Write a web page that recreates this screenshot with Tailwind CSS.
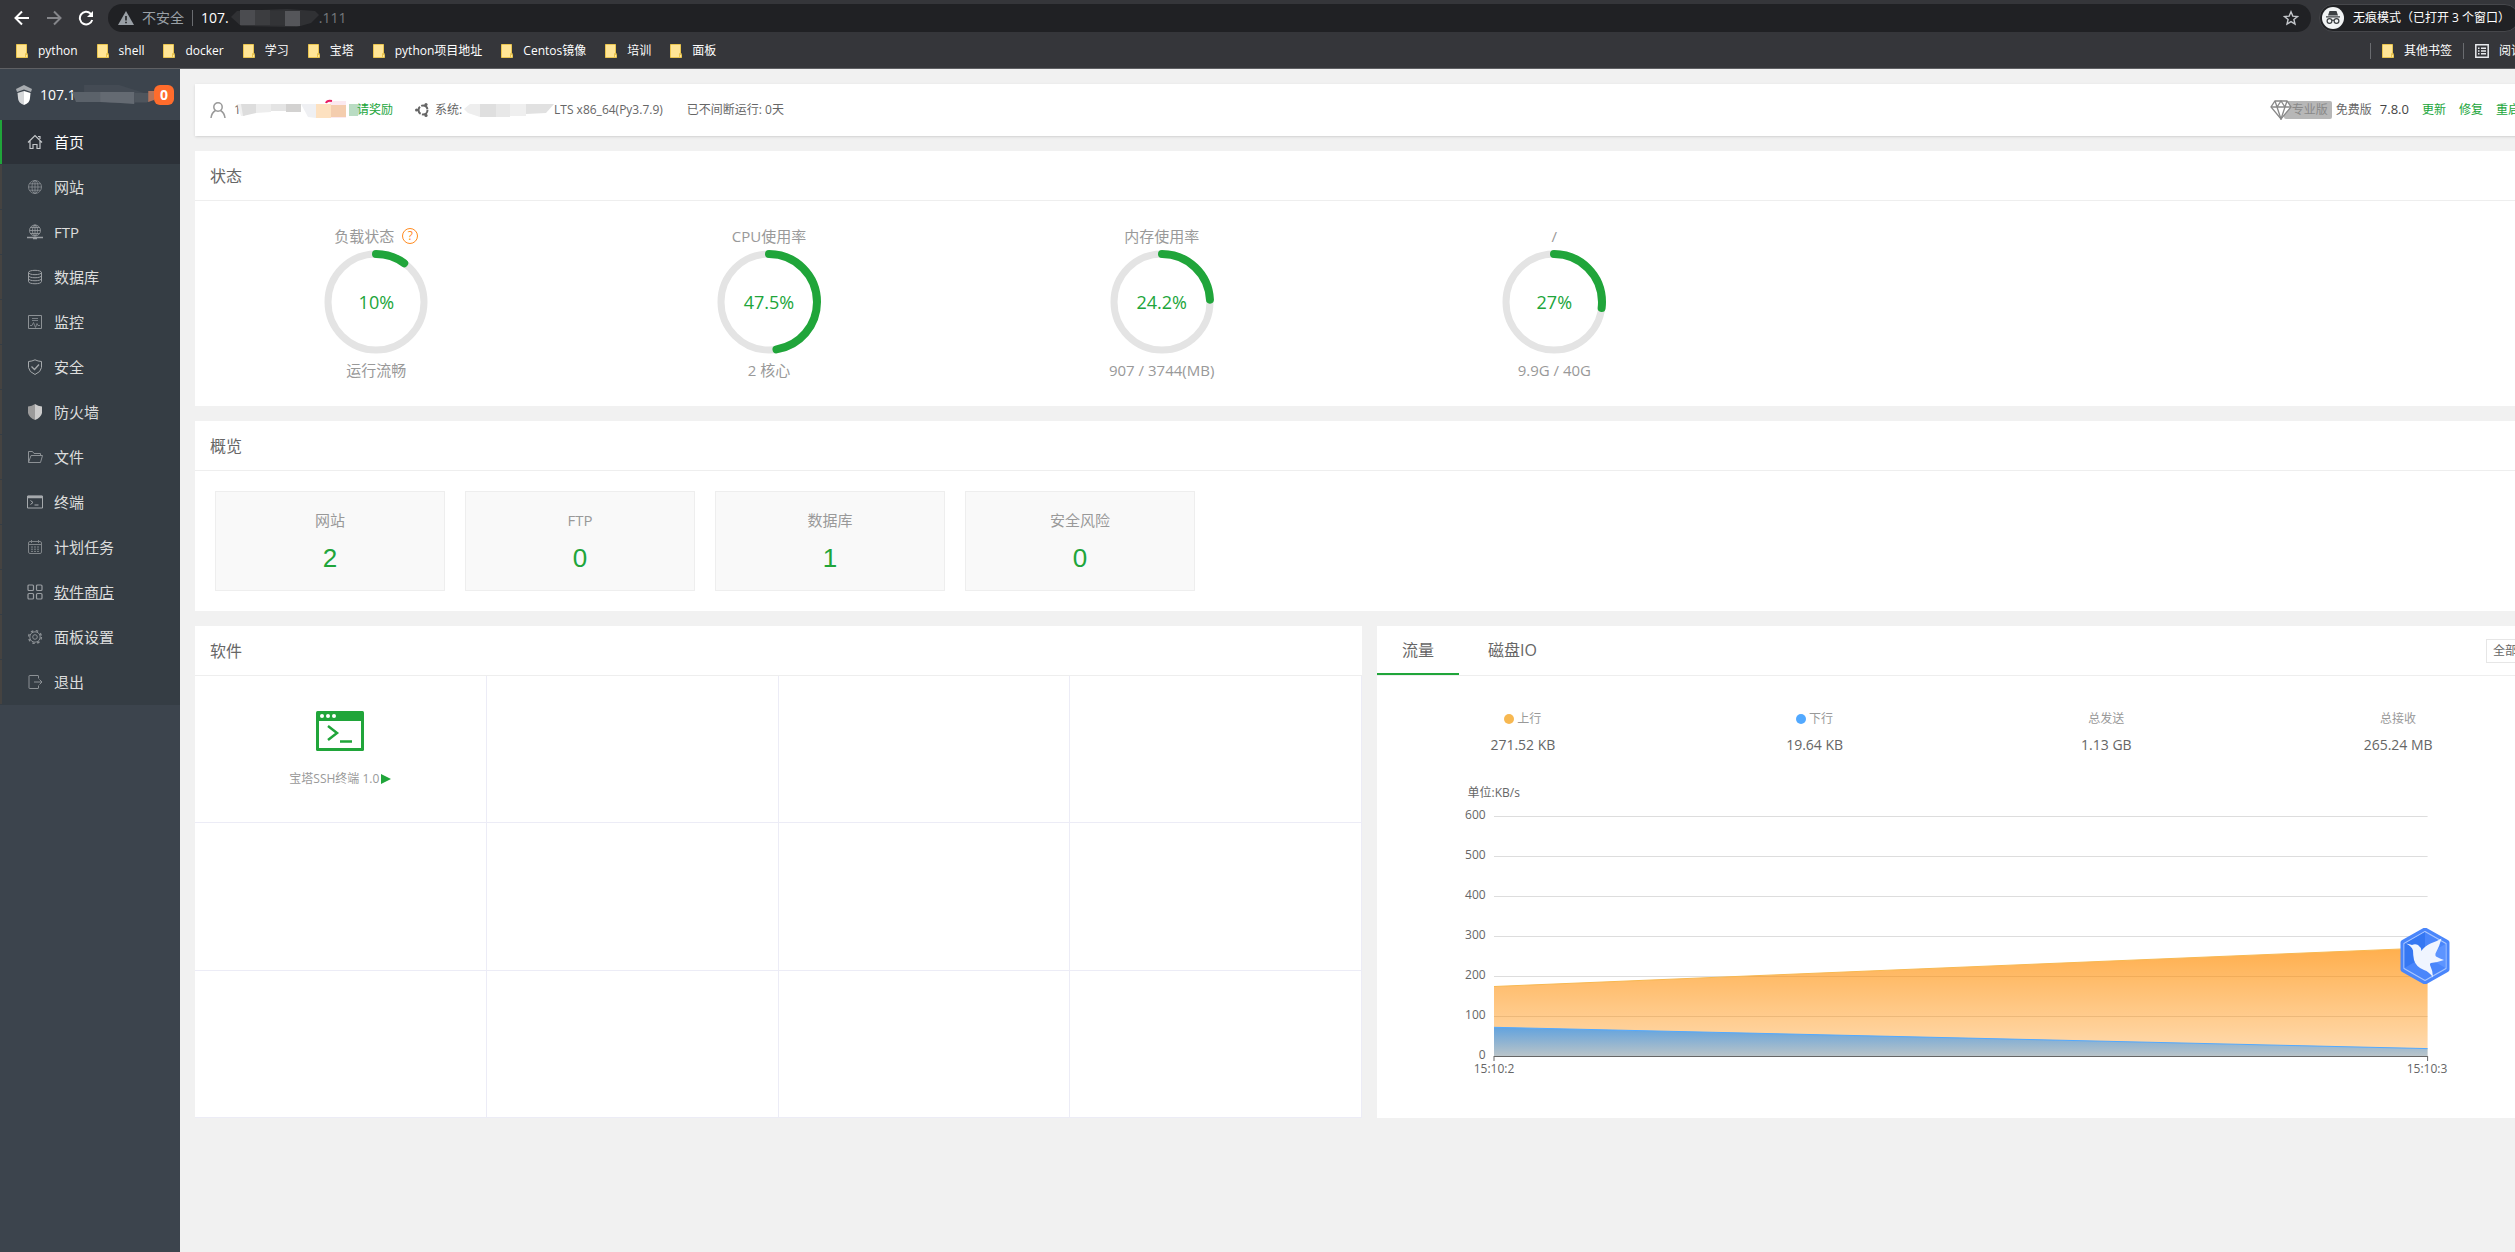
<!DOCTYPE html>
<html lang="zh-CN">
  <head>
    <meta charset="UTF-8" />
    <meta name="viewport" content="width=device-width, initial-scale=1.0" />
    <title>面板首页</title>
    <script src="https://cdn.jsdelivr.net/npm/@tailwindcss/browser@4"></script>
  </head>
  <body class="overflow-hidden bg-[#f1f1f1] font-['Open_Sans','Noto_Sans_CJK_SC',sans-serif] text-xs text-[#666]">
    <!-- The window runs a little past the right edge of the screen -->
    <div class="-mr-11 flex min-h-screen flex-col">
      <!-- Browser toolbar -->
      <header class="border-b border-[#5f6063] bg-[#35363a] text-white">
        <div class="flex h-9 items-center pr-4">
          <div class="flex w-[108px] items-center gap-4 pl-3.5">
            <button type="button" aria-label="后退">
              <svg class="size-4" viewBox="0 0 16 16" fill="none" stroke="#fff" stroke-width="2"><path d="M15 8H2M8 1.5 1.5 8 8 14.5" /></svg>
            </button>
            <button type="button" aria-label="前进">
              <svg class="size-4" viewBox="0 0 16 16" fill="none" stroke="#85868a" stroke-width="2"><path d="M1 8h13M8 1.5 14.5 8 8 14.5" /></svg>
            </button>
            <button type="button" aria-label="刷新">
              <svg class="size-4" viewBox="0 0 16 16" fill="none" stroke="#fff" stroke-width="2"><path d="M14.2 10A6.3 6.3 0 1 1 12.6 3.6L14 5" /><path d="M15 1v6H9z" fill="#fff" stroke="none" /></svg>
            </button>
          </div>
          <div class="flex h-7 flex-1 items-center rounded-full bg-[#202124] pr-3 pl-2.5 text-sm">
            <svg class="size-4" viewBox="0 0 16 16" fill="#9aa0a6"><path d="M8 1 16 15H0z" /><path d="M7.2 6h1.6v4.5H7.2zM7.2 11.7h1.6v1.6H7.2z" fill="#202124" /></svg>
            <span class="ml-2 text-[#9aa0a6]">不安全</span>
            <span class="mx-2 h-4 w-px bg-[#6a6c70]"></span>
            <span>107.</span>
            <svg class="h-5 w-[90px]" viewBox="0 0 90 20">
              <path d="M2 9 8 3l50-2 28 2 4 4-8 8-14 4-56-1z" fill="#303134" />
              <path d="M11 2h15v15H11z" fill="#4b4c50" /><path d="M26 2h15v15H26z" fill="#3c3d40" /><path d="M41 3h15v14H41z" fill="#333437" /><path d="M56 3h15v15H56z" fill="#55565a" />
            </svg>
            <span class="text-[#75787c]">.111</span>
            <button type="button" aria-label="收藏" class="ml-auto">
              <svg class="size-4" viewBox="0 0 16 16" fill="none" stroke="#c4c7cb" stroke-width="1.4"><path d="m8 1.8 1.8 4.3 4.7.4-3.6 3 1.1 4.6L8 11.6l-4 2.5 1.1-4.6-3.6-3 4.7-.4z" /></svg>
            </button>
          </div>
          <div class="ml-2 flex h-7 items-center gap-2 rounded-full border border-[#46474b] bg-[#202124] pr-2 pl-px">
            <svg class="size-6" viewBox="0 0 24 24"><circle cx="12" cy="12" r="11" fill="#f1f3f4" /><path d="M8.5 5h7l1.5 4.5H7zM5 10.2h14v1.2H5z" fill="#3c4043" /><g fill="none" stroke="#3c4043" stroke-width="1.2"><circle cx="8.5" cy="15" r="2.4" /><circle cx="15.5" cy="15" r="2.4" /><path d="M10.9 14.5q1.1-.8 2.2 0" /></g></svg>
            <span>无痕模式（已打开 3 个窗口）</span>
          </div>
          <button type="button" aria-label="菜单" class="ml-2">
            <svg class="size-4" viewBox="0 0 16 16" fill="#dfe1e5"><circle cx="8" cy="3" r="1.5" /><circle cx="8" cy="8" r="1.5" /><circle cx="8" cy="13" r="1.5" /></svg>
          </button>
        </div>
        <!-- Bookmarks -->
        <svg class="hidden">
          <symbol id="folder" viewBox="0 0 12 14"><path d="M.5.5h10v10h1v3H.5z" fill="#ffe596" stroke="#eac54f" /><path d="M9.5 13V9.5h2" fill="none" stroke="#eac54f" /></symbol>
        </svg>
        <nav class="flex h-8 items-center gap-[19px] pr-3 pb-0.5 pl-4">
          <a href="#" class="flex items-center gap-2.5"><svg class="h-3.5 w-3"><use href="#folder" /></svg>python</a>
          <a href="#" class="flex items-center gap-2.5"><svg class="h-3.5 w-3"><use href="#folder" /></svg>shell</a>
          <a href="#" class="flex items-center gap-2.5"><svg class="h-3.5 w-3"><use href="#folder" /></svg>docker</a>
          <a href="#" class="flex items-center gap-2.5"><svg class="h-3.5 w-3"><use href="#folder" /></svg>学习</a>
          <a href="#" class="flex items-center gap-2.5"><svg class="h-3.5 w-3"><use href="#folder" /></svg>宝塔</a>
          <a href="#" class="flex items-center gap-2.5"><svg class="h-3.5 w-3"><use href="#folder" /></svg>python项目地址</a>
          <a href="#" class="flex items-center gap-2.5"><svg class="h-3.5 w-3"><use href="#folder" /></svg>Centos镜像</a>
          <a href="#" class="flex items-center gap-2.5"><svg class="h-3.5 w-3"><use href="#folder" /></svg>培训</a>
          <a href="#" class="flex items-center gap-2.5"><svg class="h-3.5 w-3"><use href="#folder" /></svg>面板</a>
          <div class="ml-auto flex items-center gap-[11px]">
            <span class="h-4 w-px bg-[#6a6c70]"></span>
            <a href="#" class="flex items-center gap-2.5"><svg class="h-3.5 w-3"><use href="#folder" /></svg>其他书签</a>
            <span class="h-4 w-px bg-[#6a6c70]"></span>
            <a href="#" class="flex items-center gap-2.5">
              <svg class="size-3.5" viewBox="0 0 14 14" fill="none" stroke="#e8eaed" stroke-width="1.5"><path d="M.8.8h12.4v12.4H.8zM3 4.2h1.5M3 7h1.5M3 9.8h1.5M6 4.2h5M6 7h5M6 9.800h5" /></svg>阅读清单</a>
          </div>
        </nav>
      </header>

      <div class="flex flex-1">
        <!-- Sidebar -->
        <aside class="w-[180px] shrink-0 bg-[#3c444d] text-[15px] text-[#ddd]">
          <div class="flex h-[51px] items-center pr-1.5 pl-4 text-sm text-white">
            <svg class="h-5 w-4" viewBox="0 0 16 20"><path d="M8 0 0 4l1 3 7-2.5 7 2.5 1-3z" fill="#a7abaf" /><path d="M1.5 8 8 6v14q-6-2-6-7z" fill="#d5d7d9" /><path d="M14.5 8 8 6v14q6-2 6-7z" fill="#fff" /></svg>
            <span class="ml-2">107.1</span>
            <svg class="-ml-1 h-6 flex-1" viewBox="0 0 82 24" preserveAspectRatio="none"><path d="M12 2h35l28 9v9H38L12 15z" fill="#444b54" /><path d="M0 9h28v10H4z" fill="#5b626a" /><path d="M28 9h34v12l-14-1-20-1z" fill="#646a72" /><path d="M62 10h15v9H62z" fill="#4e555d" /><path d="M76 8h6v9l-6 2z" fill="#b5735a" /></svg>
            <a href="#" class="rounded-md bg-[#ff6c2c] px-1.5 text-sm leading-5 font-bold">0</a>
          </div>
          <ul class="border-b border-[#353d44] bg-[#353d44]">
            <li><a href="#" class="mb-px flex h-11 items-center gap-[11px] border-l-2 border-[#20a53a] bg-[#2c3138] pl-[25px] text-white">
              <svg class="size-4" viewBox="0 0 16 16" fill="none" stroke="#c4c7ca" stroke-width="1.2"><path d="M1 8.500 8 1.500l7 7M3 7v7.500h3v-4h4v4h3V7M11 2.500h2v2.500" /></svg>首页</a></li>
            <li><a href="#" class="mb-px flex h-11 items-center gap-[11px] border-l-2 border-[#454341] pl-[25px]">
              <svg class="size-4" viewBox="0 0 16 16" fill="none" stroke="#8c9195" stroke-width=".8"><circle cx="8" cy="8" r="6.5" /><ellipse cx="8" cy="8" rx="3" ry="6.5" /><path d="M8 1.500v13M1.500 8h13M2.500 4.800h11M2.500 11.200h11" /></svg>网站</a></li>
            <li><a href="#" class="mb-px flex h-11 items-center gap-[11px] border-l-2 border-[#454341] pl-[25px]">
              <svg class="size-4" viewBox="0 0 16 16" fill="none" stroke="#9a9ea2" stroke-width=".8"><circle cx="8" cy="6.5" r="5.5" /><ellipse cx="8" cy="6.5" rx="2.5" ry="5.5" /><path d="M8 1v11M2.500 6.500h11M3.500 3.500h9M3.500 9.500h9" /><path d="M0 13.500h16M6 14.500h4" stroke-width="1.5" /></svg>FTP</a></li>
            <li><a href="#" class="mb-px flex h-11 items-center gap-[11px] border-l-2 border-[#454341] pl-[25px]">
              <svg class="size-4" viewBox="0 0 16 16" fill="none" stroke="#9a9ea2"><ellipse cx="8" cy="3.5" rx="6.5" ry="2.2" /><path d="M1.500 3.500v9c0 3 13 3 13 0v-9M1.500 6.500c0 3 13 3 13 0M1.500 9.500c0 3 13 3 13 0" /></svg>数据库</a></li>
            <li><a href="#" class="mb-px flex h-11 items-center gap-[11px] border-l-2 border-[#454341] pl-[25px]">
              <svg class="size-4" viewBox="0 0 16 16" fill="none" stroke="#8c9195"><path d="M1.500 1.500h13v13h-13z" /><path d="M5 4.500h6M5 6.500h6M3 11.500h2l1.500-3 2 5 1.500-4 1 2h2" stroke-width=".8" /></svg>监控</a></li>
            <li><a href="#" class="mb-px flex h-11 items-center gap-[11px] border-l-2 border-[#454341] pl-[25px]">
              <svg class="size-4" viewBox="0 0 16 16" fill="none" stroke="#a5a9ac"><path d="M8 .8q3 1.500 6.500 1.700v6q-.5 4.500-6.500 7-6-2.500-6.500-7v-6Q5 2.300 8 .8z" /><path d="m4.500 7.500 3 3 4.500-5" stroke-width="1.3" /></svg>安全</a></li>
            <li><a href="#" class="mb-px flex h-11 items-center gap-[11px] border-l-2 border-[#454341] pl-[25px]">
              <svg class="size-4" viewBox="0 0 16 16"><path d="M8 0Q5 2 1 2.500V9q1 4.500 7 7z" fill="#9b9b9b" /><path d="M8 0q3 2 7 2.500V9q-1 4.500-7 7z" fill="#cbcbcb" /></svg>防火墙</a></li>
            <li><a href="#" class="mb-px flex h-11 items-center gap-[11px] border-l-2 border-[#454341] pl-[25px]">
              <svg class="size-4" viewBox="0 0 16 16" fill="none" stroke="#8c9195"><path d="M1.500 13.500v-11h4l1.500 2h6.500v2M1.500 13.500l2.500-7h11.500l-2 7z" /></svg>文件</a></li>
            <li><a href="#" class="mb-px flex h-11 items-center gap-[11px] border-l-2 border-[#454341] pl-[25px]">
              <svg class="size-4" viewBox="0 0 16 16" fill="none" stroke="#a5a9ac"><path d="M.5 2h15v12H.5zM3.500 6.500l2.500 2-2.500 2M7.500 11h4" /><path d="M1 3h14" stroke-width="2.5" /></svg>终端</a></li>
            <li><a href="#" class="mb-px flex h-11 items-center gap-[11px] border-l-2 border-[#454341] pl-[25px]">
              <svg class="size-4" viewBox="0 0 16 16" fill="none" stroke="#7f8488"><rect x="1.5" y="2.5" width="13" height="12" rx="1.5" /><path d="M4.500 1v3M11.500 1v3M1.500 5.500h13" /><path d="M4 8h8M4 10.200h8M4 12.400h8" stroke-dasharray="2 1" /></svg>计划任务</a></li>
            <li><a href="#" class="mb-px flex h-11 items-center gap-[11px] border-l-2 border-[#454341] pl-[25px] underline">
              <svg class="size-4" viewBox="0 0 16 16" fill="none" stroke="#9a9ea2" stroke-width="1.2"><rect x="1" y="1" width="5.5" height="5.5" rx="1" /><rect x="9.5" y="1" width="5.5" height="5.5" rx="1" /><rect x="1" y="9.5" width="5.5" height="5.5" rx="1" /><rect x="9.5" y="9.5" width="5.5" height="5.5" rx="1" /></svg>软件商店</a></li>
            <li><a href="#" class="mb-px flex h-11 items-center gap-[11px] border-l-2 border-[#454341] pl-[25px]">
              <svg class="size-4" viewBox="0 0 16 16" fill="none" stroke="#8c9195"><circle cx="8" cy="8" r="2.3" /><circle cx="8" cy="8" r="5.2" /><circle cx="8" cy="8" r="6.4" stroke-width="1.4" stroke-dasharray="2.5 2.53" /></svg>面板设置</a></li>
            <li><a href="#" class="flex h-11 items-center gap-[11px] border-l-2 border-[#454341] pl-[25px]">
              <svg class="size-4" viewBox="0 0 16 16" fill="none" stroke="#8c9195"><path d="M11.500 4.500v-2.500q0-.5-.5-.5H2.500q-.5 0-.5.5v12q0 .5.5.5H11q.5 0 .5-.5v-2.500M7 8h8M12.500 5.500 15 8l-2.500 2.500" /></svg>退出</a></li>
          </ul>
        </aside>

        <main class="flex min-w-0 flex-1 flex-col gap-[15px] p-[15px]">
          <!-- Account and system info -->
          <section class="flex h-[52px] items-center bg-white pr-6 pl-[15px] shadow-sm">
            <svg class="size-4" viewBox="0 0 16 16" fill="none" stroke="#999" stroke-width="1.5"><circle cx="8" cy="5" r="4.2" /><path d="M1 16q.5-5 4.500-7.500M15 16q-.5-5-4.500-7.500" /></svg>
            <span class="ml-2">1</span>
            <svg class="-ml-1 h-6 w-28" viewBox="0 0 112 24">
              <path d="M0 6h8v12H4z" fill="#f1f1f1" /><path d="M4 6h15v9l-13 3z" fill="#ddd" /><path d="M19 6h15v8l-15 1z" fill="#ededed" /><path d="M34 6h15v7H34z" fill="#e4e4e4" /><path d="M49 6h15v8H49z" fill="#d3d2d1" /><path d="M64 6h15v14l-8-1z" fill="#eff0f3" /><path d="M79 6h15v14H79z" fill="#fde1c0" /><path d="M90 3h19v17H94V6z" fill="#fbe9f0" /><path d="M94 7h15v12H94z" fill="#f4cdae" /><path d="M89 5q1-3 6-2" fill="none" stroke="#e91e63" stroke-width="2" />
            </svg>
            <svg class="-mr-1 h-6 w-3" viewBox="0 0 12 24"><path d="M0 6h12l-3 12H0z" fill="#b9dcc3" /></svg>
            <a href="#" class="text-[#20a53a]">请奖励</a>
            <svg class="ml-[22px] size-3.5" viewBox="0 0 14 14" fill="#666"><circle cx="8" cy="7" r="4.5" fill="none" stroke="#666" stroke-width="2" stroke-dasharray="8 1.4" /><circle cx="1.6" cy="7" r="1.6" /><circle cx="11" cy="1.6" r="1.6" /><circle cx="11" cy="12.4" r="1.6" /></svg>
            <span class="ml-1.5">系统:</span>
            <svg class="h-6 w-[92px]" viewBox="0 0 92 24">
              <path d="M2 11 8 6h10v13L6 15z" fill="#eee" /><path d="M18 6h16v13H18z" fill="#dfdfdf" /><path d="M34 6h14v13H34z" fill="#e8e8e8" /><path d="M48 6h16v12H48z" fill="#efefef" /><path d="M64 6h28l-8 9-20 1z" fill="#e1e1e1" />
            </svg>
            <span>LTS x86_64(Py3.7.9)</span>
            <span class="ml-6">已不间断运行: 0天</span>
            <div class="ml-auto flex items-center">
              <svg class="z-10 h-5 w-[22px]" viewBox="0 0 22 20" fill="#fff" stroke="#888" stroke-width="1.3"><path d="M5 1h12l4 6-10 12L1 7z" /><path d="M1 7h20M7 7l4 12 4-12M5 1l2 6 4-6 4 6 2-6" fill="none" /></svg>
              <a href="#" class="-ml-2 rounded-xs bg-[#b7b7b7] pr-1 pl-2 text-xs leading-[18px] text-[#888]">专业版</a>
              <span class="ml-1">免费版</span>
              <span class="ml-2 text-[13px] text-[#444]">7.8.0</span>
              <a href="#" class="ml-[13px] text-[#20a53a]">更新</a>
              <a href="#" class="ml-[13px] text-[#20a53a]">修复</a>
              <a href="#" class="ml-[13px] text-[#20a53a]">重启</a>
            </div>
          </section>

          <!-- Status -->
          <section class="bg-white">
            <h2 class="h-[50px] border-b border-[#eee] px-[15px] text-base leading-[50px]">状态</h2>
            <div class="mr-2 -ml-[15px] grid grid-cols-6 pt-[23px] pb-6 text-center text-[15px] text-[#999]">
              <div class="flex flex-col items-center">
                <h3 class="flex items-center gap-2 leading-6">负载状态
                  <button type="button" aria-label="负载说明" class="size-4 rounded-full border border-[#ff8b1f] text-xs leading-3 text-[#ff8b1f]">?</button>
                </h3>
                <div class="relative mt-0.5 mb-1">
                  <svg class="size-[104px] -rotate-90" viewBox="0 0 104 104" fill="none" stroke-width="7"><circle cx="52" cy="52" r="48" stroke="#e4e4e4" /><circle cx="52" cy="52" r="48" stroke="#20a53a" stroke-width="8" stroke-linecap="round" pathLength="100" stroke-dasharray="10 100" /></svg>
                  <div class="absolute inset-0 flex items-center justify-center text-lg text-[#20a53a]">10%</div>
                </div>
                <p class="leading-6">运行流畅</p>
              </div>
              <div class="flex flex-col items-center">
                <h3 class="leading-6">CPU使用率</h3>
                <div class="relative mt-0.5 mb-1">
                  <svg class="size-[104px] -rotate-90" viewBox="0 0 104 104" fill="none" stroke-width="7"><circle cx="52" cy="52" r="48" stroke="#e4e4e4" /><circle cx="52" cy="52" r="48" stroke="#20a53a" stroke-width="8" stroke-linecap="round" pathLength="100" stroke-dasharray="47.5 100" /></svg>
                  <div class="absolute inset-0 flex items-center justify-center text-lg text-[#20a53a]">47.5%</div>
                </div>
                <p class="leading-6">2 核心</p>
              </div>
              <div class="flex flex-col items-center">
                <h3 class="leading-6">内存使用率</h3>
                <div class="relative mt-0.5 mb-1">
                  <svg class="size-[104px] -rotate-90" viewBox="0 0 104 104" fill="none" stroke-width="7"><circle cx="52" cy="52" r="48" stroke="#e4e4e4" /><circle cx="52" cy="52" r="48" stroke="#20a53a" stroke-width="8" stroke-linecap="round" pathLength="100" stroke-dasharray="24.2 100" /></svg>
                  <div class="absolute inset-0 flex items-center justify-center text-lg text-[#20a53a]">24.2%</div>
                </div>
                <p class="leading-6">907 / 3744(MB)</p>
              </div>
              <div class="flex flex-col items-center">
                <h3 class="leading-6">/</h3>
                <div class="relative mt-0.5 mb-1">
                  <svg class="size-[104px] -rotate-90" viewBox="0 0 104 104" fill="none" stroke-width="7"><circle cx="52" cy="52" r="48" stroke="#e4e4e4" /><circle cx="52" cy="52" r="48" stroke="#20a53a" stroke-width="8" stroke-linecap="round" pathLength="100" stroke-dasharray="27 100" /></svg>
                  <div class="absolute inset-0 flex items-center justify-center text-lg text-[#20a53a]">27%</div>
                </div>
                <p class="leading-6">9.9G / 40G</p>
              </div>
            </div>
          </section>

          <!-- Overview -->
          <section class="bg-white">
            <h2 class="h-[50px] border-b border-[#eee] px-[15px] text-base leading-[50px]">概览</h2>
            <ul class="flex gap-5 p-5 text-center text-[15px] text-[#999]">
              <li class="h-[100px] w-[230px] border border-[#eee] bg-[#f9f9f9] pt-4">
                <p class="leading-6">网站</p>
                <a href="#" class="block pt-1.5 font-['Liberation_Sans',sans-serif] text-[26px] leading-10 text-[#20a53a]">2</a>
              </li>
              <li class="h-[100px] w-[230px] border border-[#eee] bg-[#f9f9f9] pt-4">
                <p class="leading-6">FTP</p>
                <a href="#" class="block pt-1.5 font-['Liberation_Sans',sans-serif] text-[26px] leading-10 text-[#20a53a]">0</a>
              </li>
              <li class="h-[100px] w-[230px] border border-[#eee] bg-[#f9f9f9] pt-4">
                <p class="leading-6">数据库</p>
                <a href="#" class="block pt-1.5 font-['Liberation_Sans',sans-serif] text-[26px] leading-10 text-[#20a53a]">1</a>
              </li>
              <li class="h-[100px] w-[230px] border border-[#eee] bg-[#f9f9f9] pt-4">
                <p class="leading-6">安全风险</p>
                <a href="#" class="block pt-1.5 font-['Liberation_Sans',sans-serif] text-[26px] leading-10 text-[#20a53a]">0</a>
              </li>
            </ul>
          </section>

          <div class="grid grid-cols-2 gap-[15px]">
            <!-- Software -->
            <section class="flex flex-col bg-white">
              <h2 class="h-[50px] border-b border-[#eee] px-[15px] text-base leading-[50px]">软件</h2>
              <div class="grid flex-1 grid-cols-4 grid-rows-3">
                <div class="flex flex-col items-center border-r border-b border-[#ececf6] pt-[35px]">
                  <svg class="h-10 w-12" viewBox="0 0 48 40"><rect width="48" height="40" rx="1.5" fill="#20a53a" /><path d="M3 10h42v27H3z" fill="#fff" /><circle cx="6" cy="5" r="2" fill="#fff" /><circle cx="12" cy="5" r="2" fill="#fff" /><circle cx="18" cy="5" r="2" fill="#fff" /><path d="m12 15 9 7-9 7M24 30.500h12" fill="none" stroke="#20a53a" stroke-width="2.5" /></svg>
                  <a href="#" class="mt-4 flex items-center gap-0.5 leading-6 text-[#999]">宝塔SSH终端 1.0
                    <svg class="size-2.5" viewBox="0 0 10 10"><path d="M0 0v10l10-5z" fill="#20a53a" /></svg></a>
                </div>
                <div class="border-r border-b border-[#ececf6]"></div>
                <div class="border-r border-b border-[#ececf6]"></div>
                <div class="border-r border-b border-[#ececf6]"></div>
                <div class="border-r border-b border-[#ececf6]"></div>
                <div class="border-r border-b border-[#ececf6]"></div>
                <div class="border-r border-b border-[#ececf6]"></div>
                <div class="border-r border-b border-[#ececf6]"></div>
                <div class="border-r border-b border-[#ececf6]"></div>
                <div class="border-r border-b border-[#ececf6]"></div>
                <div class="border-r border-b border-[#ececf6]"></div>
                <div class="border-r border-b border-[#ececf6]"></div>
              </div>
            </section>

            <!-- Network traffic -->
            <section class="relative bg-white pb-[41px]">
              <div class="flex h-[50px] items-center border-b border-[#eee] text-base">
                <button type="button" class="h-[49px] border-b-2 border-[#20a53a] px-[25px]">流量</button>
                <button type="button" class="ml-1 h-[49px] border-b-2 border-transparent px-[25px]">磁盘IO</button>
                <select aria-label="网卡" class="ml-auto h-6 w-[58px] appearance-none border border-[#e6e6e6] bg-white px-1.5 text-xs">
                  <option>全部</option>
                </select>
              </div>
              <dl class="grid grid-cols-4 pt-[33px] text-center">
                <div>
                  <dt class="flex items-center justify-center gap-[3px] leading-5 text-[#999]"><span class="size-2.5 rounded-full bg-[#f7b851]"></span>上行</dt>
                  <dd class="text-sm leading-8">271.52 KB</dd>
                </div>
                <div>
                  <dt class="flex items-center justify-center gap-[3px] leading-5 text-[#999]"><span class="size-2.5 rounded-full bg-[#52a9ff]"></span>下行</dt>
                  <dd class="text-sm leading-8">19.64 KB</dd>
                </div>
                <div>
                  <dt class="leading-5 text-[#999]">总发送</dt>
                  <dd class="text-sm leading-8">1.13 GB</dd>
                </div>
                <div>
                  <dt class="leading-5 text-[#999]">总接收</dt>
                  <dd class="text-sm leading-8">265.24 MB</dd>
                </div>
              </dl>
              <div class="mt-6 grid grid-cols-[10%_80%_10%]">
                <div class="col-span-3 flex w-1/5 justify-center leading-4">单位:KB/s</div>
                <div class="mt-1.5 flex flex-col gap-6 pr-2 text-right leading-4">
                  <span>600</span>
                  <span>500</span>
                  <span>400</span>
                  <span>300</span>
                  <span>200</span>
                  <span>100</span>
                  <span>0</span>
                </div>
                <div class="mt-[15px]">
                  <svg class="h-[245px] w-full overflow-visible" viewBox="0 0 100 245" preserveAspectRatio="none">
                    <defs>
                      <linearGradient id="up" x1="0" y1="0" x2="0" y2="1"><stop offset="0" stop-color="#ff8c00" stop-opacity=".7" /><stop offset="1" stop-color="#ff8c00" stop-opacity=".3" /></linearGradient>
                      <linearGradient id="down" x1="0" y1="0" x2="0" y2="1"><stop offset="0" stop-color="#1e90ff" stop-opacity=".7" /><stop offset="1" stop-color="#1e90ff" stop-opacity=".3" /></linearGradient>
                    </defs>
                    <path d="M0 .5h100M0 40.500h100M0 80.500h100M0 120.500h100M0 160.500h100M0 200.500h100" stroke="#ddd" vector-effect="non-scaling-stroke" />
                    <path d="M0 170.500 100 131.900V240.500H0z" fill="url(#up)" />
                    <path d="M0 170.500 100 131.900" stroke="#f7b851" vector-effect="non-scaling-stroke" />
                    <path d="M0 211.300 100 232.600V240.500H0z" fill="url(#down)" />
                    <path d="M0 211.300 100 232.600" stroke="#52a9ff" vector-effect="non-scaling-stroke" />
                    <path d="M0 240.500h100M0 240v5M100 240v5" stroke="#666" vector-effect="non-scaling-stroke" />
                  </svg>
                  <div class="-mx-5 flex justify-between leading-4">
                    <span>15:10:2</span>
                    <span>15:10:3</span>
                  </div>
                </div>
              </div>
              <!-- Floating download helper -->
              <button type="button" aria-label="下载助手" class="absolute top-[302px] right-[94px]">
                <svg class="h-14 w-[50px]" viewBox="0 0 50 56"><path d="M25 2 47 14.500v27L25 54 3 41.500v-27z" fill="#4a86fb" stroke="#4a86fb" stroke-width="5" stroke-linejoin="round" /><path d="M25 3.500 46 15.500v25L25 52.500 4 40.500v-25z" fill="#4a86fb" stroke="#a9c7ff" stroke-width="1.2" stroke-linejoin="round" /><path d="M25 4v24L4.500 40V16z" fill="#3577f2" /><path d="M25 28 45.500 40V16z" fill="#5d94ff" /><path d="M6 15.500q4 .5 6 1.500 3-1.500 6 0 3 2 3.500 6 3-5 9-7.500 7-2.500 11-5-2 8-6 15-.5 2 .5 3 4 2 8 3.500-7 2.500-13 3-1.500.5-1 2 3 6 3 12.500-4-6-9-7.500-8-3-10-10-1-5-1-9.500-1-4-7-7z" fill="#f0f5ff" /></svg>
              </button>
            </section>
          </div>
        </main>
      </div>
    </div>
  </body>
</html>
